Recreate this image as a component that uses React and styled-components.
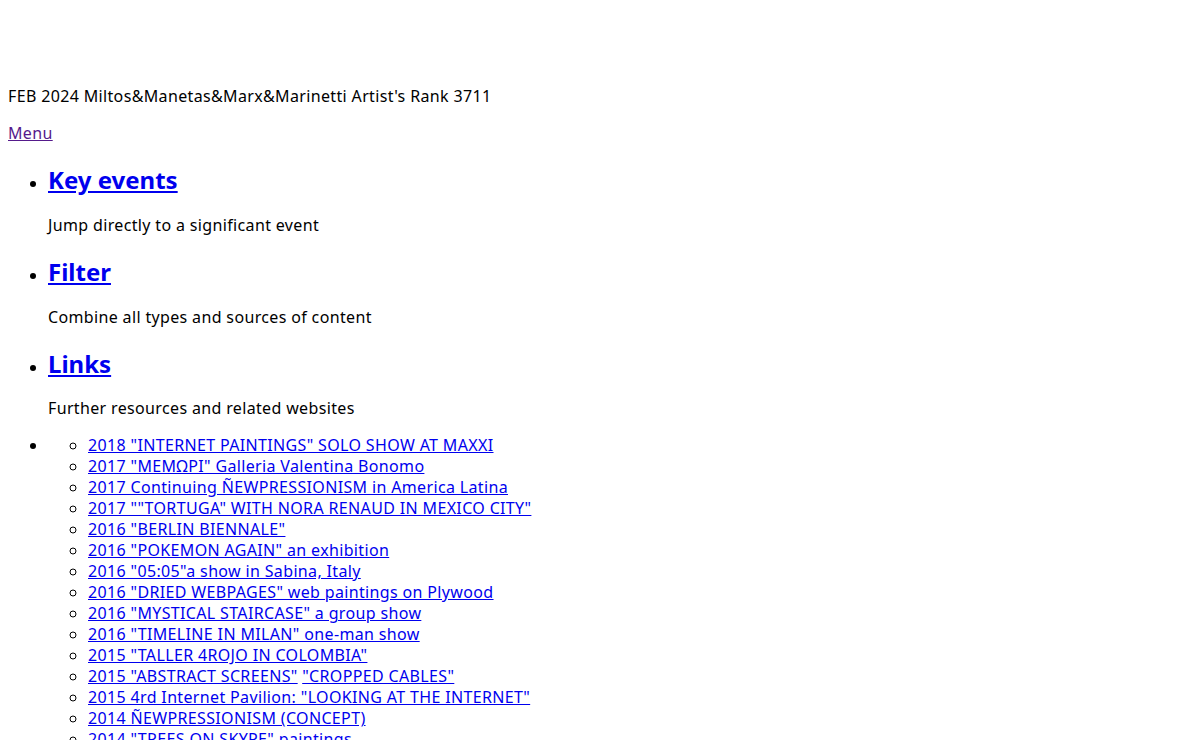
import React from "react";
import styled, { createGlobalStyle } from "styled-components";

const Global = createGlobalStyle`
  body {
    margin: 8px;
    background: #ffffff;
    color: #000000;
    font-family: "Noto Sans", "Open Sans", sans-serif;
    font-size: 16px;
    line-height: 21px;
    letter-spacing: 0.35px;
  }
`;

const Banner = styled.div`
  height: 62px;
`;

const Para = styled.p`
  margin: 16px 0;
`;

const Link = styled.a`
  color: ${(p) => (p.$visited ? "#551a8b" : "#0000ee")};
  text-decoration: underline;
  cursor: pointer;
`;

const MenuList = styled.ul`
  margin: 16px 0;
  padding-left: 40px;
  list-style: disc;
`;

const MenuItem = styled.li``;

const Heading = styled.h2`
  margin: 19.92px 0;
  font-size: 24px;
  line-height: 31px;
  font-weight: bold;
  letter-spacing: 0;
`;

const SubList = styled.ul`
  margin: 0;
  padding-left: 40px;
  list-style: circle;
`;

const SubItem = styled.li``;

const menu = [
  { title: "Key events", desc: "Jump directly to a significant event" },
  { title: "Filter", desc: "Combine all types and sources of content" },
  { title: "Links", desc: "Further resources and related websites" },
];

const events = [
  ['2018 "INTERNET PAINTINGS" SOLO SHOW AT MAXXI'],
  ['2017 "MEMΩPI" Galleria Valentina Bonomo'],
  ["2017 Continuing ÑEWPRESSIONISM in America Latina"],
  ['2017 ""TORTUGA" WITH NORA RENAUD IN MEXICO CITY"'],
  ['2016 "BERLIN BIENNALE"'],
  ['2016 "POKEMON AGAIN" an exhibition'],
  ['2016 "05:05"a show in Sabina, Italy'],
  ['2016 "DRIED WEBPAGES" web paintings on Plywood'],
  ['2016 "MYSTICAL STAIRCASE" a group show'],
  ['2016 "TIMELINE IN MILAN" one-man show'],
  ['2015 "TALLER 4ROJO IN COLOMBIA"'],
  ['2015 "ABSTRACT SCREENS"', '"CROPPED CABLES"'],
  ['2015 4rd Internet Pavilion: "LOOKING AT THE INTERNET"'],
  ["2014 ÑEWPRESSIONISM (CONCEPT)"],
  ['2014 "TREES ON SKYPE" paintings'],
  ['2013 "INTERNET PAVILION" Venice'],
  ['2012 "PAINTINGS OF COMPUTERS"'],
];

export default function App() {
  return (
    <>
      <Global />
      <Banner />
      <Para>FEB 2024 Miltos&amp;Manetas&amp;Marx&amp;Marinetti Artist's Rank 3711</Para>
      <Para>
        <Link $visited>Menu</Link>
      </Para>
      <MenuList>
        {menu.map((m) => (
          <MenuItem key={m.title}>
            <Heading>
              <Link>{m.title}</Link>
            </Heading>
            <Para>{m.desc}</Para>
          </MenuItem>
        ))}
        <MenuItem>
          <SubList>
            {events.map((e, i) => (
              <SubItem key={i}>
                {e.map((t, j) => (
                  <React.Fragment key={j}>
                    {j > 0 && " "}
                    <Link>{t}</Link>
                  </React.Fragment>
                ))}
              </SubItem>
            ))}
          </SubList>
        </MenuItem>
      </MenuList>
    </>
  );
}
